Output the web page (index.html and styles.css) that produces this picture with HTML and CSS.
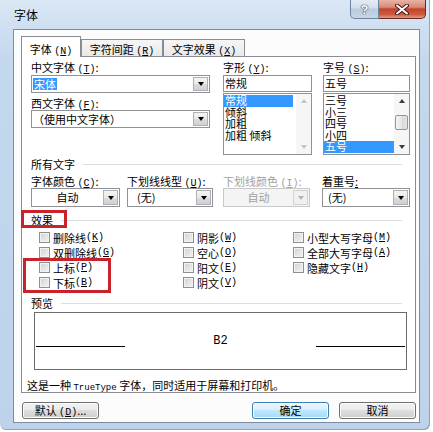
FILE: index.html
```html
<!DOCTYPE html>
<html lang="zh-CN">
<head>
    <meta charset="UTF-8">
    <title>字体</title>
    <link rel="stylesheet" href="styles.css">
</head>
<body>
    <div class="window">
        <div class="titlebar">
            <span class="title">字体</span>
            <div class="caption">
                <span class="cap cap-help">?</span>
                <span class="cap cap-close">
                    <svg width="14" height="11" viewBox="0 0 14 11">
                        <path d="M2 1.5 L12 9.5 M12 1.5 L2 9.5" stroke="#4a1c14" stroke-width="4" stroke-linecap="round"/>
                        <path d="M2 1.5 L12 9.5 M12 1.5 L2 9.5" stroke="#fff" stroke-width="2" stroke-linecap="round"/>
                    </svg>
                </span>
            </div>
        </div>

        <div class="client">
            <div class="tabs">
                <span class="tab active">字体 <span class="k">(<u>N</u>)</span></span>
                <span class="tab">字符间距 <span class="k">(<u>R</u>)</span></span>
                <span class="tab">文字效果 <span class="k">(<u>X</u>)</span></span>
            </div>

            <div class="panel">
                <div class="top">
                    <div class="col col-font">
                        <div class="label">中文字体 <span class="k">(<u>T</u>)</span>:</div>
                        <div class="combo">
                            <span class="value"><span class="hl">宋体</span></span>
                            <span class="drop"><i></i></span>
                        </div>
                        <div class="label label-2">西文字体 <span class="k">(<u>F</u>)</span>:</div>
                        <div class="combo combo-2">
                            <span class="value">（使用中文字体）</span>
                            <span class="drop"><i></i></span>
                        </div>
                    </div>

                    <div class="col col-style">
                        <div class="label">字形 <span class="k">(<u>Y</u>)</span>:</div>
                        <div class="textbox">常规</div>
                        <div class="listbox">
                            <div class="items">
                                <div class="item sel">常规</div>
                                <div class="item">倾斜</div>
                                <div class="item">加粗</div>
                                <div class="item">加粗 倾斜</div>
                            </div>
                            <div class="vscroll off">
                                <span class="arr up"></span>
                                <span class="track"></span>
                                <span class="arr down"></span>
                            </div>
                        </div>
                    </div>

                    <div class="col col-size">
                        <div class="label">字号 <span class="k">(<u>S</u>)</span>:</div>
                        <div class="textbox">五号</div>
                        <div class="listbox">
                            <div class="items">
                                <div class="item">三号</div>
                                <div class="item">小三</div>
                                <div class="item">四号</div>
                                <div class="item">小四</div>
                                <div class="item sel">五号</div>
                            </div>
                            <div class="vscroll">
                                <span class="arr up"></span>
                                <span class="thumb"></span>
                                <span class="track"></span>
                                <span class="arr down"></span>
                            </div>
                        </div>
                    </div>
                </div>

                <div class="group group-all">所有文字</div>
                <div class="fields">
                    <div class="field">
                        <div class="label">字体颜色 <span class="k">(<u>C</u>)</span>:</div>
                        <div class="combo combo-color">
                            <span class="value center">自动</span>
                            <span class="drop"><i></i></span>
                        </div>
                    </div>
                    <div class="field">
                        <div class="label">下划线线型 <span class="k">(<u>U</u>)</span>:</div>
                        <div class="combo combo-line">
                            <span class="value">(无)</span>
                            <span class="drop"><i></i></span>
                        </div>
                    </div>
                    <div class="field disabled">
                        <div class="label">下划线颜色 <span class="k">(<u>I</u>)</span>:</div>
                        <div class="combo combo-ucolor">
                            <span class="value center">自动</span>
                            <span class="drop"><i></i></span>
                        </div>
                    </div>
                    <div class="field">
                        <div class="label">着重号<u>:</u></div>
                        <div class="combo combo-dot">
                            <span class="value">(无)</span>
                            <span class="drop"><i></i></span>
                        </div>
                    </div>
                </div>

                <div class="group group-fx">效果</div>
                <div class="checks">
                    <label class="check"><span class="box"></span>删除线 <span class="k">(<u>K</u>)</span></label>
                    <label class="check"><span class="box"></span>双删除线 <span class="k">(<u>G</u>)</span></label>
                    <label class="check"><span class="box"></span>上标 <span class="k">(<u>P</u>)</span></label>
                    <label class="check"><span class="box"></span>下标 <span class="k">(<u>B</u>)</span></label>
                    <label class="check"><span class="box"></span>阴影 <span class="k">(<u>W</u>)</span></label>
                    <label class="check"><span class="box"></span>空心 <span class="k">(<u>O</u>)</span></label>
                    <label class="check"><span class="box"></span>阳文 <span class="k">(<u>E</u>)</span></label>
                    <label class="check"><span class="box"></span>阴文 <span class="k">(<u>V</u>)</span></label>
                    <label class="check"><span class="box"></span>小型大写字母 <span class="k">(<u>M</u>)</span></label>
                    <label class="check"><span class="box"></span>全部大写字母 <span class="k">(<u>A</u>)</span></label>
                    <label class="check"><span class="box"></span>隐藏文字 <span class="k">(<u>H</u>)</span></label>
                </div>

                <div class="group group-preview">预览</div>
                <div class="preview">
                    <span class="rule"></span>
                    <span class="sample">B2</span>
                    <span class="rule"></span>
                </div>
                <div class="note">这是一种 <span class="mono">TrueType</span> 字体，同时适用于屏幕和打印机。</div>

                <!-- red annotation frames -->
                <div class="mark mark-fx"></div>
                <div class="mark mark-sub"></div>
            </div>

            <div class="buttons">
                <span class="btn btn-default-set">默认 <span class="k">(<u>D</u>)</span>...</span>
                <span class="btn btn-ok">确定</span>
                <span class="btn">取消</span>
            </div>
        </div>
    </div>
</body>
</html>
```

FILE: styles.css
```css
:root {
    --frame-top: #dae7f5;
    --frame: #c3d7ed;
    --client-border: #7a8da5;
    --tab-border: #898c95;
    --field-border: #8e9196;
    --select-color: #3399ff;
    --group-line: #dcdfe4;
    --mark-color: #c8232b;
    --disabled-text: #a0a0a0;
}

* {
    box-sizing: border-box;
}

body {
    margin: 0;
    background-color: #fff;
    font-family: "Noto Sans CJK SC", "Liberation Sans", sans-serif;
    font-size: 11px;
    color: #000;
    overflow: hidden;
}

u {
    text-decoration: underline;
}

.k {
    font-family: "Liberation Mono", monospace;
    font-size: 10px;
}

/* window frame */
.window {
    width: 430px;
    height: 430px;
    display: flex;
    flex-direction: column;
    background: linear-gradient(var(--frame-top), var(--frame) 60px, #bed3ea);
    border-radius: 0 0 6px 6px;
    box-shadow: inset -1px -1px 0 #8ea6c2;
}

.titlebar {
    height: 29px;
    display: flex;
    align-items: flex-start;
    padding-left: 14px;
}

.title {
    font-size: 12px;
    line-height: 29px;
}

.caption {
    display: flex;
    margin-left: auto;
    margin-right: 4px;
}

.cap {
    height: 19px;
    display: flex;
    align-items: center;
    justify-content: center;
}

.cap-help {
    width: 29px;
    border: 1px solid #6e84a0;
    border-top: none;
    border-radius: 0 0 0 5px;
    background: linear-gradient(#e4ecf5, #d2deeb 45%, #b9cbdf 50%, #c7d6e6);
    font-family: "Liberation Sans", sans-serif;
    font-weight: bold;
    font-size: 13px;
    color: #fff;
    text-shadow: 0 0 1px #2f425e, 0 0 1px #2f425e, 0 0 1px #2f425e;
}

.cap-close {
    width: 47px;
    border: 1px solid #6a2a24;
    border-top: none;
    border-left: none;
    border-radius: 0 0 5px 0;
    background: linear-gradient(#e9b3a6, #d88a77 40%, #c3432c 50%, #cc5a40 80%, #e29b84);
}

/* client area */
.client {
    margin-left: 13px;
    width: 407px;
    height: 394px;
    border: 1px solid var(--client-border);
    background-color: #fcfcfc;
    padding: 6px 3px 0 7px;
}

.tabs {
    height: 20px;
    display: flex;
    align-items: flex-end;
}

.tab {
    width: 82px;
    height: 17px;
    border: 1px solid var(--tab-border);
    border-bottom: none;
    padding-top: 4px;
    line-height: 11px;
    text-align: center;
    white-space: nowrap;
    background: linear-gradient(#f6f6f6, #e9e9e9);
}

.tab.active {
    width: 60px;
    height: 21px;
    margin-bottom: -1px;
    padding-top: 7px;
    background: #fff;
    position: relative;
    z-index: 1;
}

.panel {
    height: 337px;
    border: 1px solid var(--tab-border);
    background-color: #fff;
    padding: 4px 5px 0 9px;
    position: relative;
}

.label {
    height: 12px;
    line-height: 12px;
    white-space: nowrap;
}

/* font / style / size columns */
.top {
    display: flex;
    height: 94px;
}

.col-font {
    width: 179px;
}

.col-style {
    width: 89px;
    margin-left: 13px;
}

.col-size {
    width: 87px;
    margin-left: 11px;
}

.combo {
    display: flex;
    height: 18px;
    margin-top: 2px;
    border: 1px solid var(--field-border);
    background-color: #fff;
}

.combo .value {
    flex: 1;
    padding-left: 1px;
    line-height: 16px;
    white-space: nowrap;
}

.combo .value.center {
    text-align: center;
}

.hl {
    display: inline-block;
    background-color: var(--select-color);
    color: #fff;
    line-height: 12px;
    padding: 0 1px;
}

.label-2 {
    margin-top: 4px;
}

.combo-2 {
    margin-top: 1px;
}

.drop {
    width: 15px;
    margin: 1px;
    border: 1px solid #aeb1b5;
    background: linear-gradient(#f4f4f4, #e9e9e9 50%, #dcdcdc 51%, #d0d0d0);
    display: flex;
    align-items: center;
    justify-content: center;
}

.drop i {
    width: 0;
    height: 0;
    border-left: 3.5px solid transparent;
    border-right: 3.5px solid transparent;
    border-top: 4px solid #000;
}

.textbox {
    height: 17px;
    margin-top: 2px;
    margin-bottom: 1px;
    border: 1px solid var(--field-border);
    padding-left: 1px;
    line-height: 15px;
}

.listbox {
    height: 62px;
    display: flex;
    border: 1px solid var(--field-border);
}

.items {
    flex: 1;
    padding-top: 1px;
    white-space: nowrap;
}

.col-style .items {
    margin-right: 3px;
}

.item {
    height: 11.5px;
    line-height: 11.5px;
    padding-left: 1px;
}

.item.sel {
    background-color: var(--select-color);
    color: #fff;
}

.vscroll {
    width: 15px;
    display: flex;
    flex-direction: column;
    align-items: center;
    background-color: #f6f6f6;
}

.arr {
    height: 14px;
    width: 100%;
    display: flex;
    align-items: center;
    justify-content: center;
}

.arr::after {
    content: "";
    width: 0;
    height: 0;
    border-left: 3.5px solid transparent;
    border-right: 3.5px solid transparent;
}

.arr.up::after {
    border-bottom: 4px solid #3c3c3c;
}

.arr.down::after {
    border-top: 4px solid #3c3c3c;
}

.vscroll.off .arr.up::after {
    border-bottom-color: #c4c4c4;
}

.vscroll.off .arr.down::after {
    border-top-color: #c4c4c4;
}

.track {
    flex: 1;
}

.thumb {
    width: 13px;
    height: 15px;
    margin-top: 7px;
    border: 1px solid #959595;
    border-radius: 2px;
    background: linear-gradient(90deg, #f5f5f5, #e6e6e6 50%, #d8d8d8 51%, #e4e4e4);
}

/* group headers */
.group {
    display: flex;
    align-items: center;
    height: 12px;
    line-height: 12px;
    margin-right: 8px;
}

.group::after {
    content: "";
    flex: 1;
    height: 1px;
    margin-left: 8px;
    background-color: var(--group-line);
}

.group-all {
    margin-top: 3px;
}

.group-fx {
    margin-top: 7px;
}

.group-preview {
    margin-top: 7px;
}

/* all text row */
.fields {
    display: grid;
    grid-template-columns: 96px 96px 99px auto;
    margin-top: 5px;
}

.fields .combo {
    height: 19px;
    margin-top: 1px;
}

.fields .combo .value {
    line-height: 17px;
}

.combo-color {
    width: 89px;
}

.combo-line {
    width: 86px;
}

.combo-line .value {
    padding-left: 9px;
}

.combo-ucolor {
    width: 87px;
}

.combo-dot {
    width: 88px;
}

.combo-dot .value {
    padding-left: 5px;
}

.field.disabled .label,
.field.disabled .value {
    color: var(--disabled-text);
}

.field.disabled .combo {
    border-color: #c9c9c9;
    background-color: #f4f4f4;
}

.field.disabled .drop {
    border-color: #d3d3d3;
    background: #f0f0f0;
}

.field.disabled .drop i {
    border-top-color: #b3b3b3;
}

/* effects */
.checks {
    display: grid;
    grid-template-rows: repeat(4, 15px);
    grid-template-columns: 144px 110px auto;
    grid-auto-flow: column;
    margin-top: 4px;
    padding-left: 8px;
}

.check {
    display: flex;
    align-items: center;
    white-space: nowrap;
}

.box {
    width: 11px;
    height: 11px;
    margin-right: 3px;
    border: 1px solid #8e8f8f;
    background: linear-gradient(135deg, #cdd1d6, #f4f4f4);
    box-shadow: inset 0 0 0 1px #f2f2f2;
}

/* preview */
.preview {
    width: 373px;
    height: 58px;
    margin: 3px 0 0 3px;
    border: 1px solid #6b6b6b;
    padding: 0 1px;
    display: flex;
    align-items: center;
}

.rule {
    width: 89px;
    height: 1px;
    margin-top: 10px;
    background-color: #000;
}

.sample {
    flex: 1;
    text-align: center;
    font-family: "Liberation Mono", monospace;
    font-size: 12px;
}

.note {
    margin: 9px 0 0 -4px;
    height: 12px;
    line-height: 12px;
    white-space: nowrap;
}

.mono {
    font-family: "Liberation Mono", monospace;
    font-size: 9px;
}

.mark {
    position: absolute;
    border: 3px solid var(--mark-color);
}

.mark-fx {
    left: -1px;
    top: 153px;
    width: 46px;
    height: 18px;
}

.mark-sub {
    left: 1px;
    top: 201px;
    width: 88px;
    height: 35px;
}

/* dialog buttons */
.buttons {
    display: flex;
    margin-top: 9px;
    padding-left: 1px;
}

.btn {
    width: 77px;
    height: 17px;
    border: 1px solid #707070;
    border-radius: 3px;
    background: linear-gradient(#f2f2f2, #ebebeb 45%, #dddddd 50%, #cfcfcf);
    box-shadow: inset 0 0 0 1px #fbfbfb;
    text-align: center;
    line-height: 15px;
    white-space: nowrap;
}

.btn-default-set {
    margin-right: auto;
}

.btn-ok {
    margin-right: 10px;
    border-color: #3c7fb1;
    background: linear-gradient(#eaf6fd, #d9f0fc 45%, #bee6fd 50%, #a7d9f5);
}
```
